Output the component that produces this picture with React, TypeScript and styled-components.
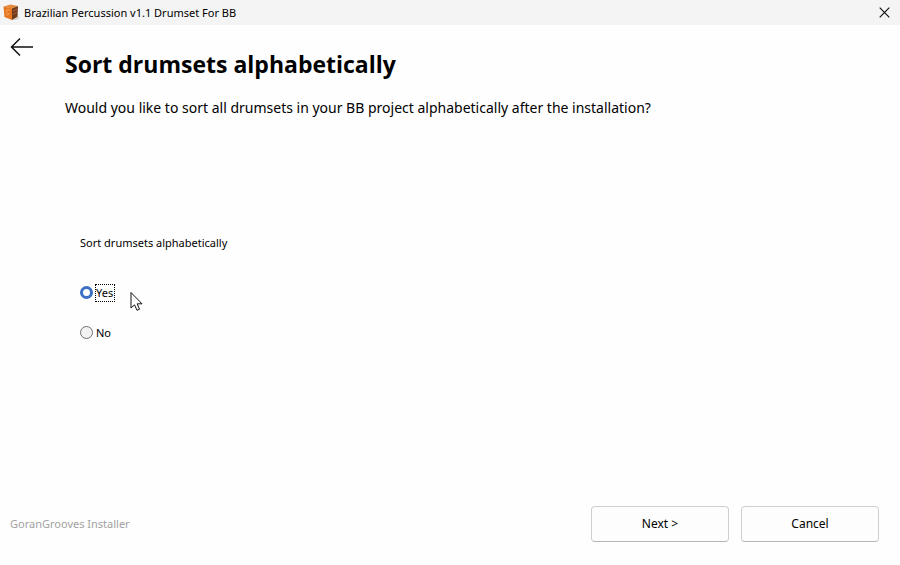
import React, { useState } from "react";
import styled, { createGlobalStyle } from "styled-components";

const GlobalStyle = createGlobalStyle`
  *, *::before, *::after { box-sizing: border-box; }
  body {
    margin: 0;
    background: #fefefe;
    color: #000;
    font: 11px/16px "Noto Sans", "Open Sans", sans-serif;
  }
  button, input { font: inherit; color: inherit; }
`;

const Window = styled.div`
  position: relative;
  display: flex;
  flex-direction: column;
  min-height: 100vh;
`;

const TitleBar = styled.header`
  display: flex;
  align-items: center;
  gap: 4px;
  height: 25px;
  padding-left: 3px;
  background: #f4f4f4;
`;

const WindowTitle = styled.span`
  flex: 1;
`;

const IconButton = styled.button`
  display: flex;
  align-items: center;
  justify-content: center;
  padding: 0;
  border: 0;
  background: none;
`;

const CloseButton = styled(IconButton)`
  width: 31px;
  height: 25px;
`;

const BackButton = styled(IconButton)`
  width: 24px;
  height: 20px;
`;

const Content = styled.main`
  display: grid;
  grid-template-columns: 24px 1fr;
  column-gap: 31px;
  align-items: start;
  flex: 1;
  padding: 12px 20px 0 10px;
`;

const Page = styled.section`
  padding-top: 11px;
`;

const Heading = styled.h1`
  margin: 0;
  font-family: "Open Sans", "Noto Sans", sans-serif;
  font-size: 23px;
  line-height: 32px;
  font-weight: 700;
`;

const Question = styled.p`
  margin: 18px 0 0;
  font-size: 14px;
  line-height: 20px;
`;

const Choices = styled.fieldset`
  display: flex;
  flex-direction: column;
  align-items: flex-start;
  gap: 24px;
  min-width: 0;
  margin: 117px 0 0 15px;
  padding: 0;
  border: 0;
`;

const Legend = styled.legend`
  padding: 0;
  margin-bottom: 34px;
`;

const Choice = styled.label`
  display: flex;
  align-items: flex-start;
  gap: 3px;
`;

const Radio = styled.input`
  appearance: none;
  width: 13px;
  height: 13px;
  margin: 1px 0 0;
  border: 1px solid #707070;
  border-radius: 50%;
  background: #f3f3f3;
  outline: none;

  &:checked {
    border: 3px solid #3a6fc4;
    background: #fff;
  }
`;

const ChoiceText = styled.span<{ $focused: boolean }>`
  padding-right: 1px;
  outline: ${(p) => (p.$focused ? "1px dotted #000" : "none")};
`;

const Footer = styled.footer`
  display: flex;
  align-items: center;
  gap: 12px;
  padding: 0 21px 23px 10px;
`;

const Brand = styled.span`
  flex: 1;
  color: #a2a2a2;
`;

const ActionButton = styled.button`
  width: 138px;
  height: 36px;
  padding: 0;
  border: 1px solid #cfcfcf;
  border-bottom-color: #b8b8b8;
  border-radius: 4px;
  background: #fdfdfd;
  font-size: 12px;
`;

const Pointer = styled.svg`
  position: absolute;
  left: 130px;
  top: 291px;
  pointer-events: none;
`;

const AppIcon = () => (
  <svg width="17" height="18" viewBox="0 0 17 18" aria-hidden="true">
    <path d="M13 14 L16.5 12 L15 15 L9 16.5 Z" fill="#c9c7c5" />
    <path d="M0.5 2.5 L7.5 0.5 L15 2 L9 4.8 Z" fill="#e58a3b" />
    <path d="M0.5 2.5 L9 4.6 V16 L1.5 13 Z" fill="#e5761f" />
    <path d="M9 4.6 L15 2 L14.5 12.8 L9 16 Z" fill="#70391c" />
    <path d="M10 7 L14 5 M10 10.5 L14 8" stroke="#a9602f" />
    <path d="M6.8 6.3 C4 4.9 2 6.5 3.8 8.1 C6 9.5 7 11 3.2 10.8" fill="none" stroke="#f6b16d" />
  </svg>
);

const choices = ["Yes", "No"];

export default function App() {
  const [selected, setSelected] = useState("Yes");

  return (
    <>
      <GlobalStyle />
      <Window>
        <TitleBar>
          <AppIcon />
          <WindowTitle>Brazilian Percussion v1.1 Drumset For BB</WindowTitle>
          <CloseButton type="button" aria-label="Close">
            <svg width="11" height="11" viewBox="0 0 11 11" aria-hidden="true">
              <path d="M0.7 0.7 L10.3 10.3 M10.3 0.7 L0.7 10.3" stroke="#111" strokeWidth="1.2" />
            </svg>
          </CloseButton>
        </TitleBar>
        <Content>
          <BackButton type="button" aria-label="Back">
            <svg width="24" height="20" viewBox="0 0 24 20" aria-hidden="true">
              <path d="M23 10 H1.8 M10 1.5 L1.5 10 L10 18.5" fill="none" stroke="#111" strokeWidth="1.5" />
            </svg>
          </BackButton>
          <Page>
            <Heading>Sort drumsets alphabetically</Heading>
            <Question>
              Would you like to sort all drumsets in your BB project alphabetically after the installation?
            </Question>
            <Choices>
              <Legend>Sort drumsets alphabetically</Legend>
              {choices.map((choice) => (
                <Choice key={choice}>
                  <Radio
                    type="radio"
                    name="sort"
                    value={choice}
                    checked={selected === choice}
                    onChange={() => setSelected(choice)}
                  />
                  <ChoiceText $focused={selected === choice}>{choice}</ChoiceText>
                </Choice>
              ))}
            </Choices>
          </Page>
        </Content>
        <Footer>
          <Brand>GoranGrooves Installer</Brand>
          <ActionButton type="button">Next &gt;</ActionButton>
          <ActionButton type="button">Cancel</ActionButton>
        </Footer>
        <Pointer width="13" height="21" viewBox="0 0 13 21" aria-hidden="true">
          <path
            d="M1 1.5 V17 L4.5 13.8 L7 19.3 L9.5 18.2 L7.2 12.8 H12 Z"
            fill="#fff"
            stroke="#111"
            strokeLinejoin="round"
          />
        </Pointer>
      </Window>
    </>
  );
}
